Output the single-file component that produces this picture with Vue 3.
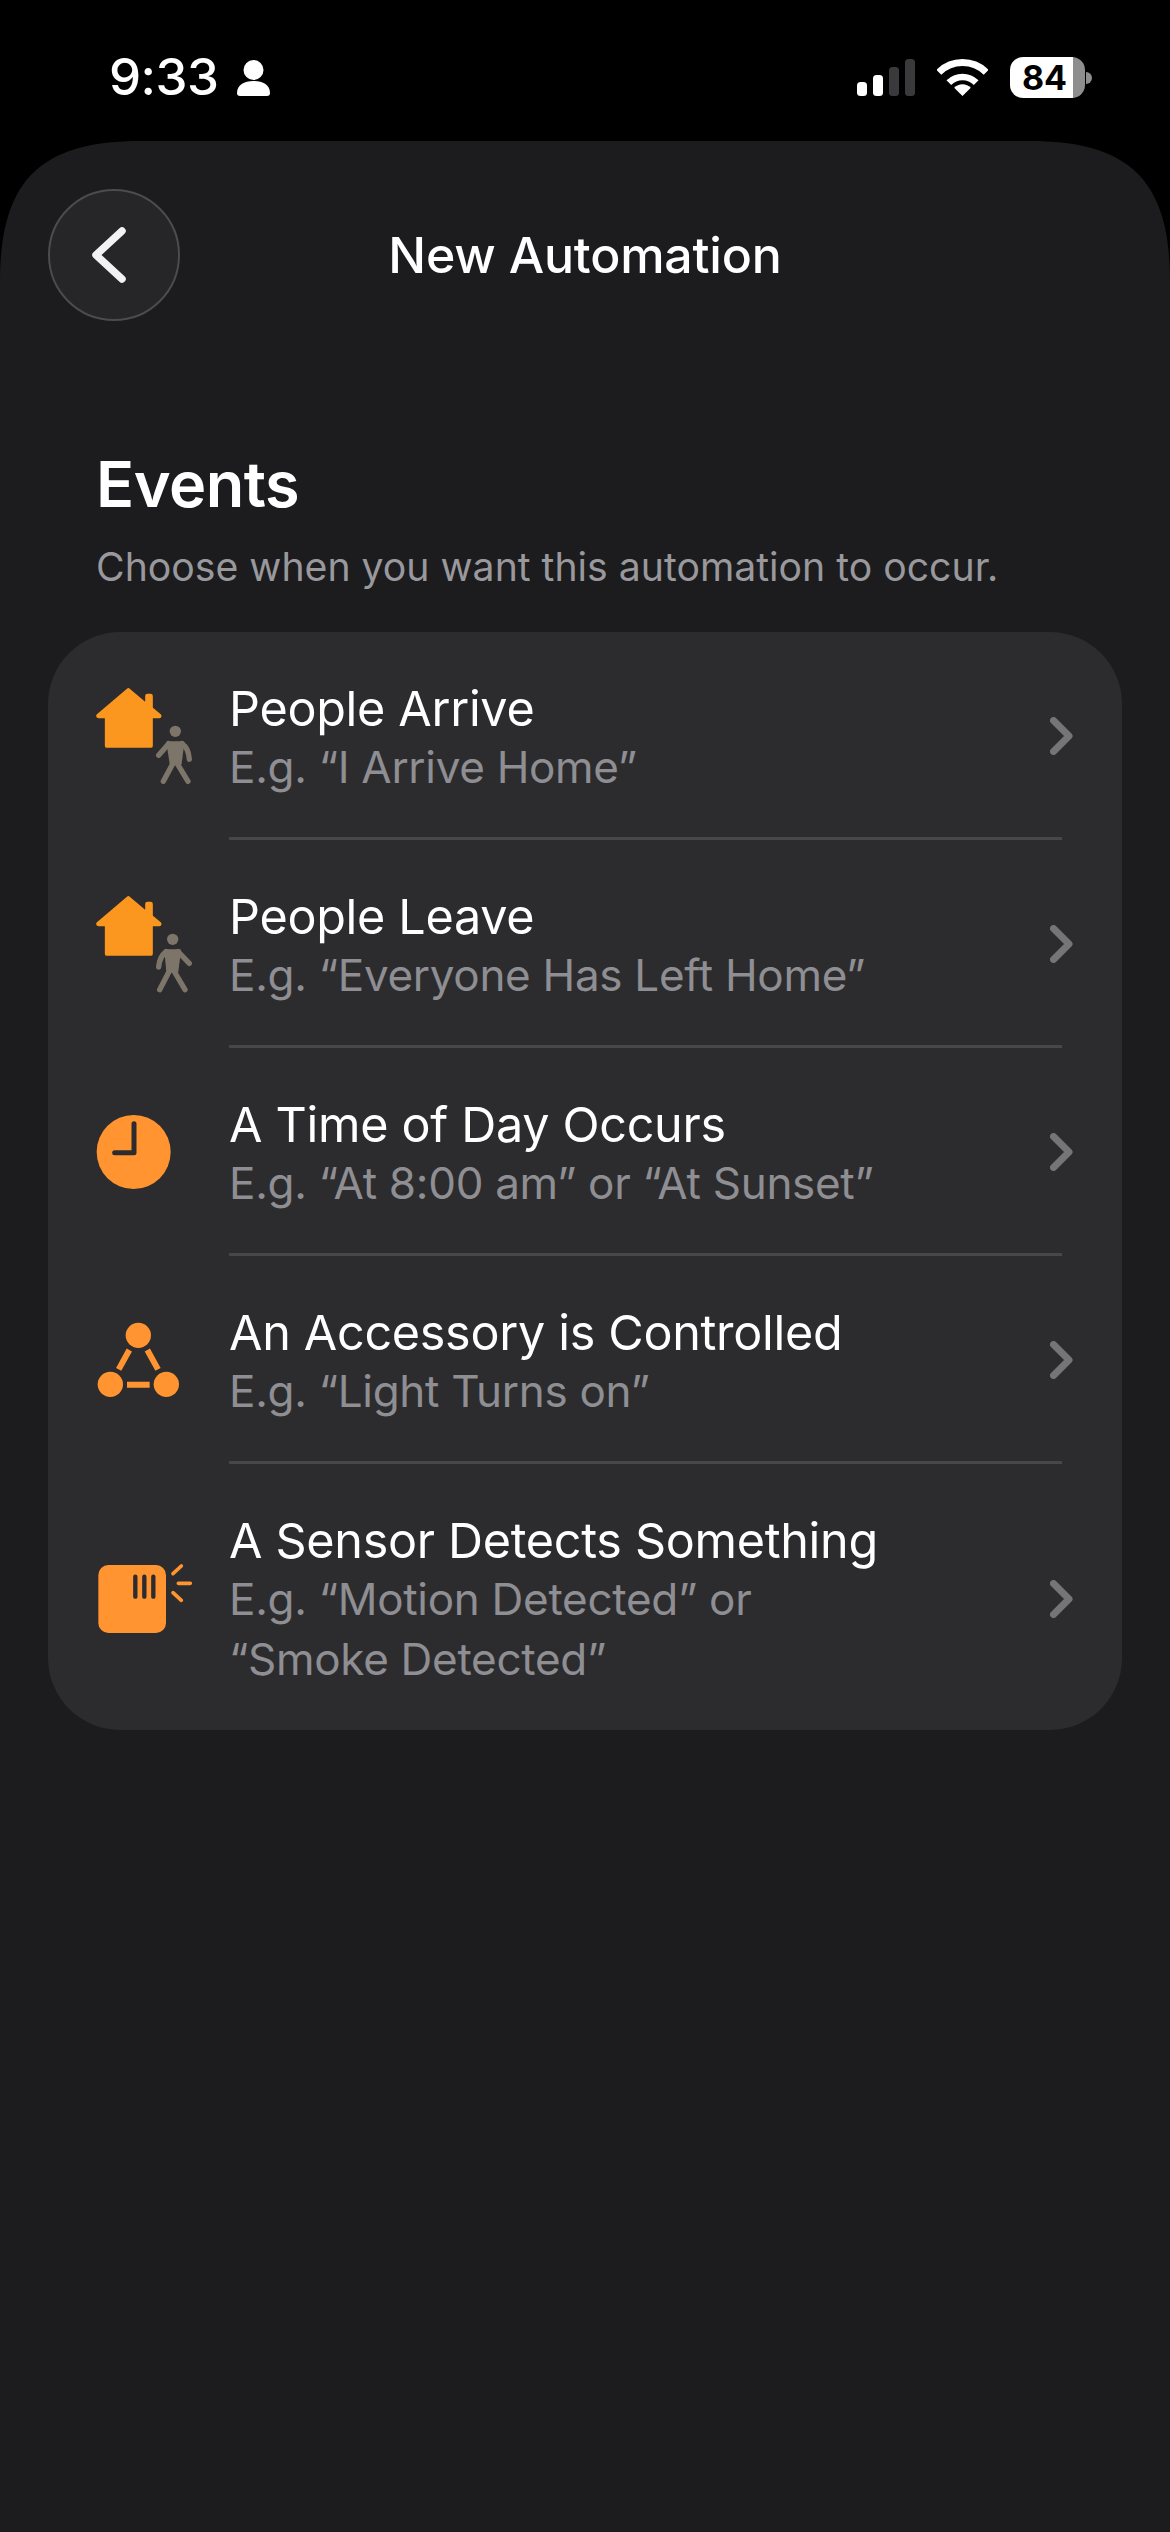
<script setup>
const rows = [
  { id: 'arrive', title: 'People Arrive', sub: ['E.g. “I Arrive Home”'] },
  { id: 'leave', title: 'People Leave', sub: ['E.g. “Everyone Has Left Home”'] },
  { id: 'time', title: 'A Time of Day Occurs', sub: ['E.g. “At 8:00 am” or “At Sunset”'] },
  { id: 'accessory', title: 'An Accessory is Controlled', sub: ['E.g. “Light Turns on”'] },
  { id: 'sensor', title: 'A Sensor Detects Something', sub: ['E.g. “Motion Detected” or', '“Smoke Detected”'] }
]
</script>

<template>
  <div class="page">
    <header class="status">
      <div class="status-left">
        <span class="time">9:33</span>
        <svg class="person" viewBox="0 0 33 36"><circle cx="16.5" cy="10" r="10" fill="#fff"/><path d="M0 33C0 25 7 21 16.5 21S33 25 33 33Q33 36 30 36H3Q0 36 0 33Z" fill="#fff"/></svg>
      </div>
      <div class="status-right">
        <svg class="signal" viewBox="0 0 58 37">
          <rect x="0" y="23" width="10" height="14" rx="3.5" fill="#fff"/>
          <rect x="16" y="16" width="10" height="21" rx="3.5" fill="#fff"/>
          <rect x="32" y="8" width="10" height="29" rx="3.5" fill="#3a3a3c"/>
          <rect x="48" y="0" width="10" height="37" rx="3.5" fill="#3a3a3c"/>
        </svg>
        <svg class="wifi" viewBox="0 0 152 111">
          <path d="M5 40A101 101 0 0 1 147 40" fill="none" stroke="#fff" stroke-width="21"/>
          <path d="M35 71A58 58 0 0 1 117 71" fill="none" stroke="#fff" stroke-width="20"/>
          <path d="M76 111L51 86A35 35 0 0 1 101 86Z" fill="#fff"/>
        </svg>
        <div class="battery">
          <div class="battery-body">84</div>
          <span class="battery-nub"></span>
        </div>
      </div>
    </header>

    <main class="sheet">
      <div class="nav">
        <button class="back" type="button" aria-label="Back">
          <svg viewBox="0 0 40 62"><path d="M31 7L5 31L31 55" fill="none" stroke="#f2f2f4" stroke-width="7.5" stroke-linecap="round" stroke-linejoin="round"/></svg>
        </button>
        <h1 class="nav-title">New Automation</h1>
        <span></span>
      </div>

      <section class="intro">
        <h2>Events</h2>
        <p>Choose when you want this automation to occur.</p>
      </section>

      <section class="card">
        <div v-for="(row, i) in rows" :key="row.id" class="row-wrap">
          <div class="row" :class="{ tall: row.id === 'sensor' }">
            <svg v-if="row.id === 'arrive'" class="icon" viewBox="108 75 300 300">
              <path d="M205 88L262 136V105H272V143L298 165H272V254H141V165H115Z" fill="#fb961e" stroke="#fb961e" stroke-width="13" stroke-linejoin="round"/>
              <circle cx="346" cy="211" r="17" fill="#7d7569"/>
              <path d="M322 244H370L362 308H332Z" fill="#7d7569" stroke="#7d7569" stroke-width="6" stroke-linejoin="round"/>
              <path d="M326 248L296 283M366 248Q386 262 388 295M340 305L310 361M350 305L384 361" fill="none" stroke="#7d7569" stroke-width="16" stroke-linecap="round"/>
            </svg>
            <svg v-else-if="row.id === 'leave'" class="icon" viewBox="108 69 300 300">
              <path d="M205 82L262 130V99H272V137L298 159H272V248H141V159H115Z" fill="#fb961e" stroke="#fb961e" stroke-width="13" stroke-linejoin="round"/>
              <circle cx="338" cy="205" r="17" fill="#7d7569"/>
              <path d="M316 238H360L352 302H322Z" fill="#7d7569" stroke="#7d7569" stroke-width="6" stroke-linejoin="round"/>
              <path d="M354 242L388 277M318 242Q298 258 296 288M328 300L299 356M342 300L375 356" fill="none" stroke="#7d7569" stroke-width="16" stroke-linecap="round"/>
            </svg>
            <svg v-else-if="row.id === 'time'" class="icon" viewBox="108 66 300 300">
              <circle cx="221" cy="216" r="111" fill="#ff9430"/>
              <path d="M222 131V218H164" fill="none" stroke="#2c2c2e" stroke-width="15" stroke-linecap="round" stroke-linejoin="round"/>
            </svg>
            <svg v-else-if="row.id === 'accessory'" class="icon" viewBox="108 60 300 300">
              <g fill="#ff9430"><circle cx="235" cy="136" r="38"/><circle cx="151" cy="283" r="38"/><circle cx="319" cy="283" r="38"/></g>
              <path d="M208 180L176 238M262 180L294 238M201 284H269" fill="none" stroke="#ff9430" stroke-width="18"/>
            </svg>
            <svg v-else class="icon" viewBox="108 84 300 300">
              <rect x="115" y="132" width="203" height="204" rx="30" fill="#ff9430"/>
              <path d="M226 167V227M253 167V227M280 167V227" fill="none" stroke="#2c2c2e" stroke-width="13" stroke-linecap="round"/>
              <path d="M339 158L364 135M355 187H391M339 215L364 238" fill="none" stroke="#ff9430" stroke-width="11" stroke-linecap="round"/>
            </svg>
            <div class="text">
              <div class="title">{{ row.title }}</div>
              <div v-for="line in row.sub" :key="line" class="sub">{{ line }}</div>
            </div>
            <svg class="chev" viewBox="0 0 24 38"><path d="M3.5 3.5L19 19L3.5 34.5" fill="none" stroke="#757578" stroke-width="7" stroke-linecap="round" stroke-linejoin="round"/></svg>
          </div>
          <div v-if="i < rows.length - 1" class="sep"></div>
        </div>
      </section>
    </main>
  </div>
</template>

<style>
html, body { margin: 0; background: #000; }
</style>

<style scoped>
.page {
  width: 1170px;
  height: 2532px;
  overflow: hidden;
  display: flex;
  flex-direction: column;
  background: #000;
  color: #fff;
  font-family: Inter, "Liberation Sans", sans-serif;
}
.status {
  height: 141px;
  flex: none;
  display: flex;
  justify-content: space-between;
  box-sizing: border-box;
  padding: 57px 78px 0 109px;
}
.status-left { display: flex; align-items: flex-start; gap: 18px; }
.time { font-size: 51px; font-weight: 500; line-height: 40px; letter-spacing: -0.5px; }
.person { width: 33px; height: 36px; margin-top: 3px; }
.status-right { display: flex; align-items: flex-start; }
.signal { width: 58px; height: 37px; margin-top: 2px; }
.wifi { width: 51px; height: 37px; margin-top: 2px; margin-left: 22px; }
.battery { display: flex; align-items: center; margin-left: 22px; }
.battery-body {
  width: 75px;
  height: 41px;
  border-radius: 13px;
  background: linear-gradient(90deg, #fff 0 84%, #8e8e8e 84% 100%);
  color: #000;
  font-size: 34px;
  font-weight: 700;
  line-height: 41px;
  text-align: center;
  box-sizing: border-box;
  padding-right: 6px;
}
.battery-nub {
  width: 6px;
  height: 12px;
  margin-left: 1px;
  border-radius: 0 6px 6px 0;
  background: #8e8e8e;
}
.sheet {
  flex: 1;
  background: #1c1c1e;
  clip-path: path("M0 2391V140C0 40 40 0 140 0H1030C1130 0 1170 40 1170 140V2391Z");
  padding: 48px 48px 0;
  display: flex;
  flex-direction: column;
}
.nav {
  display: grid;
  grid-template-columns: 132px 1fr 132px;
  align-items: center;
}
.back {
  width: 132px;
  height: 132px;
  box-sizing: border-box;
  border-radius: 50%;
  border: 2px solid #4c4c4e;
  background: #262628;
  padding: 0;
  display: flex;
  align-items: center;
  justify-content: center;
}
.back svg { width: 40px; height: 62px; margin-right: 6px; }
.nav-title {
  margin: 0;
  text-align: center;
  font-size: 50px;
  font-weight: 500;
  line-height: 60px;
  letter-spacing: -0.2px;
}
.intro { padding: 125px 48px 0; }
.intro h2 {
  margin: 0;
  font-size: 63px;
  font-weight: 600;
  line-height: 76px;
  letter-spacing: -0.5px;
}
.intro p {
  margin: 21px 0 0;
  font-size: 39.2px;
  line-height: 48px;
  color: #98989d;
}
.card {
  margin-top: 41px;
  background: #2c2c2e;
  border-radius: 72px;
}
.row {
  height: 205px;
  display: flex;
  align-items: center;
  padding-left: 48px;
  padding-right: 48px;
}
.row.tall { height: 266px; }
.sep {
  height: 3px;
  margin: 0 60px 0 181px;
  background: #474749;
}
.icon { width: 100px; height: 100px; flex: none; margin-top: 3px; margin-right: 33px; }
.text { flex: 1; min-width: 0; padding-top: 8px; }
.title { font-size: 48.5px; line-height: 56px; font-weight: 400; letter-spacing: -0.3px; }
.sub { font-size: 44px; line-height: 60px; color: #8e8e93; letter-spacing: -0.3px; }
.chev { width: 24px; height: 38px; flex: none; margin-top: 3px; }
</style>
